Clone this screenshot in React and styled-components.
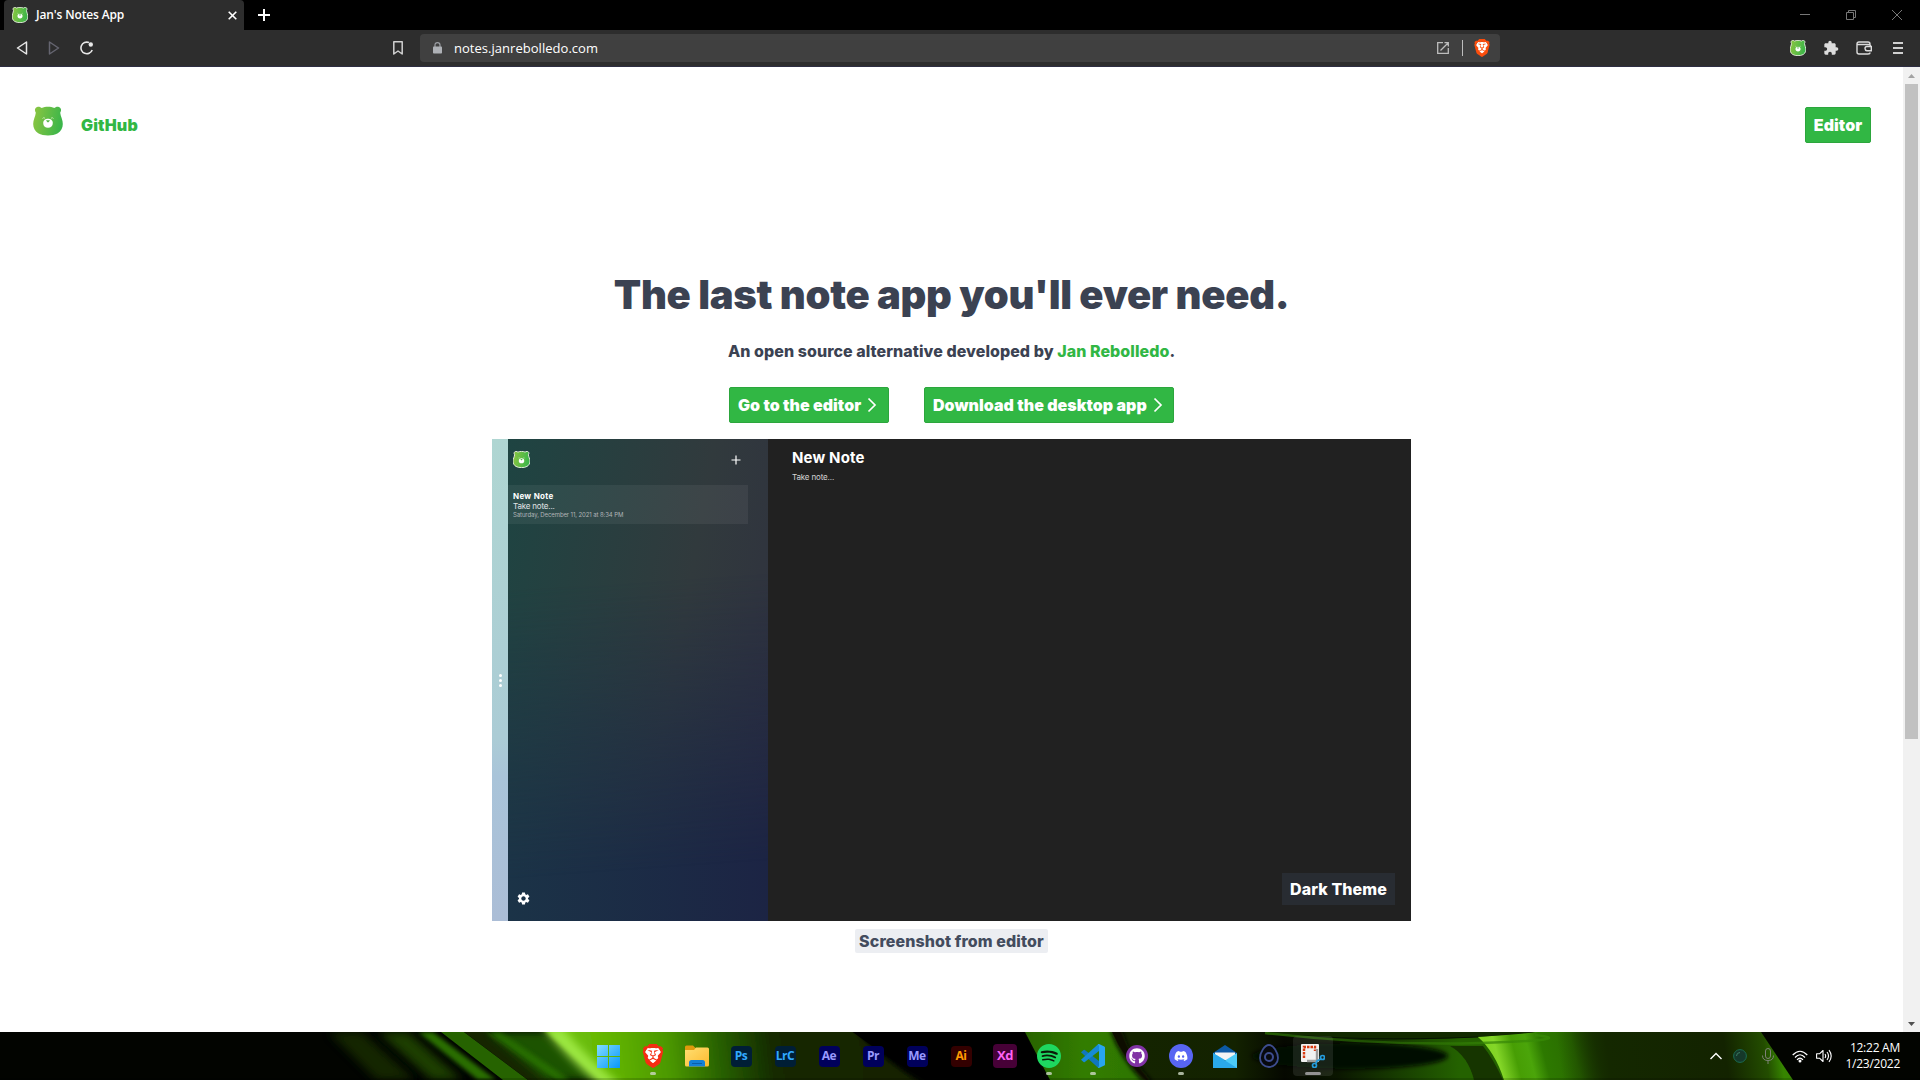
import React from "react";
import styled, { createGlobalStyle } from "styled-components";
import { SiBrave, SiSpotify } from "react-icons/si";
import { FaGithub, FaDiscord } from "react-icons/fa";
import { MdSettings, MdExtension } from "react-icons/md";

const GlobalStyle = createGlobalStyle`
  * { box-sizing: border-box; }
  body { margin: 0; background: #fff; overflow: hidden; font-family: Inter, "Liberation Sans", sans-serif; }
  svg { display: block; flex: none; }
  h1, h2, p { margin: 0; }
`;

const GREEN = "#31b744";
const system = `"Open Sans", "Noto Sans", sans-serif`;

const Screen = styled.div`
  width: 1920px;
  height: 1080px;
  display: flex;
  flex-direction: column;
  overflow: hidden;
`;

/* Browser chrome */
const TabStrip = styled.div`
  height: 30px;
  flex: none;
  background: #000;
  display: flex;
  align-items: center;
  padding-left: 4px;
`;
const Tab = styled.div`
  width: 240px;
  height: 30px;
  display: flex;
  align-items: center;
  padding: 0 7px 0 8px;
  background: #2d2d2d;
  border-radius: 4px 4px 0 0;
`;
const TabTitle = styled.span`
  flex: 1;
  margin-left: 8px;
  font: 600 12px/16px ${system};
  letter-spacing: -0.14px;
  color: #fff;
  white-space: nowrap;
`;
const NewTab = styled.div`
  margin-left: 14px;
`;
const WindowControls = styled.div`
  display: flex;
  gap: 36px;
  margin-left: auto;
  padding-right: 18px;
`;
const Toolbar = styled.div`
  height: 37px;
  flex: none;
  background: #2d2d2d;
  border-bottom: 1px solid #2d2d42;
  display: flex;
  align-items: center;
`;
const NavButtons = styled.div`
  width: 389px;
  display: flex;
  align-items: center;
  gap: 20px;
  padding-left: 16px;
`;
const Bookmark = styled.div`
  width: 31px;
  padding-left: 3px;
`;
const AddressBar = styled.div`
  width: 1080px;
  height: 28px;
  border-radius: 4px;
  background: #404040;
  display: flex;
  align-items: center;
  padding: 0 9px 0 13px;
`;
const Url = styled.span`
  flex: 1;
  margin-left: 12px;
  font: 400 13px/18px ${system};
  letter-spacing: 0.03px;
  color: #fff;
`;
const Divider = styled.div`
  width: 1px;
  height: 16px;
  margin: 0 10px 0 13px;
  background: #bdbdbd;
`;
const Extensions = styled.div`
  margin-left: auto;
  display: flex;
  align-items: center;
  gap: 17px;
  padding-right: 16px;
`;
const MenuButton = styled.div`
  margin-left: 3px;
`;

/* Page */
const Viewport = styled.div`
  height: 965px;
  flex: none;
  display: flex;
  background: #fff;
`;
const Page = styled.main`
  width: 1903px;
  display: flex;
  flex-direction: column;
  align-items: center;
`;
const ScrollTrack = styled.div`
  width: 17px;
  background: #f1f1f1;
  display: flex;
  flex-direction: column;
  align-items: center;
`;
const ScrollThumb = styled.div`
  width: 13px;
  height: 655px;
  background: #c1c1c1;
`;
const ScrollArrow = styled.div`
  width: 17px;
  height: 17px;
  display: grid;
  place-items: center;
  margin-top: ${(p) => (p.$last ? "auto" : 0)};
`;
const Header = styled.header`
  width: 100%;
  height: 113px;
  display: flex;
  align-items: flex-start;
  padding: 40px 32px 0 33px;
`;
const Logo = styled.div`
  height: 30px;
  margin-top: -1px;
`;
const GitHubLink = styled.a`
  margin: 8px auto 0 18px;
  font-weight: 900;
  font-size: 16px;
  line-height: 20px;
  letter-spacing: 0.15px;
  color: ${GREEN};
`;
const Button = styled.button`
  height: 36px;
  width: ${(p) => p.$width}px;
  padding: 0 8px;
  border: 1px solid #2ca63d;
  border-radius: 2px;
  background: ${GREEN};
  color: #fff;
  font: 900 16px/20px Inter, sans-serif;
  letter-spacing: 0.05px;
  display: flex;
  align-items: center;
  justify-content: ${(p) => (p.$center ? "center" : "flex-start")};
  gap: 6px;
  white-space: nowrap;
`;
const Title = styled.h1`
  margin-top: 87px;
  font-weight: 900;
  font-size: 40px;
  line-height: 56px;
  letter-spacing: -0.31px;
  color: #3b4252;
  white-space: nowrap;
`;
const Subtitle = styled.p`
  margin-top: 17px;
  margin-bottom: 1px;
  font-weight: 800;
  font-size: 16px;
  line-height: 22px;
  letter-spacing: 0.06px;
  color: #3b4252;
  white-space: nowrap;
  a { color: ${GREEN}; }
`;
const Actions = styled.div`
  display: flex;
  gap: 35px;
  margin-top: 24px;
`;

/* Editor preview */
const Preview = styled.section`
  width: 919px;
  height: 482px;
  margin-top: 16px;
  display: flex;
`;
const Handle = styled.div`
  width: 16px;
  background: linear-gradient(to bottom, #afd6d2, #abccd5 62%, #a9c4d9 70%, #abbdd6);
  display: flex;
  flex-direction: column;
  align-items: center;
  justify-content: center;
  gap: 2px;
  i { width: 3px; height: 3px; border-radius: 50%; background: #fff; }
`;
const Sidebar = styled.aside`
  width: 260px;
  position: relative;
  display: flex;
  flex-direction: column;
  background: linear-gradient(to right, #1b3347, #1c2444);
  isolation: isolate;
  &::before {
    content: "";
    position: absolute;
    inset: 0;
    z-index: -1;
    background: linear-gradient(100deg, #1e4442, #313a3d 60%, #2f303f);
    mask-image: linear-gradient(176deg, #000 30%, transparent 88%);
  }
`;
const SidebarTop = styled.div`
  display: flex;
  justify-content: space-between;
  align-items: center;
  height: 46px;
  padding: 0 27px 5px 5px;
`;
const NoteCard = styled.div`
  width: 240px;
  height: 39px;
  padding: 6px 5px;
  background: rgba(255, 255, 255, 0.06);
  color: #fff;
`;
const NoteTitle = styled.div`
  font-size: 8px;
  line-height: 10px;
  font-weight: 700;
  letter-spacing: 0.3px;
`;
const NoteText = styled.div`
  font-size: 8px;
  line-height: 10px;
  letter-spacing: -0.18px;
  color: #e2e4e6;
`;
const NoteDate = styled.div`
  font-size: 6px;
  line-height: 7px;
  letter-spacing: -0.1px;
  color: #b0b4b7;
`;
const SettingsButton = styled.div`
  margin: auto 0 15px 8px;
`;
const EditorPane = styled.div`
  flex: 1;
  background: #212121;
  display: flex;
  flex-direction: column;
  padding: 9px 16px 16px 24px;
`;
const EditorTitle = styled.h2`
  font-size: 15px;
  line-height: 20px;
  font-weight: 700;
  letter-spacing: 0.15px;
  color: #fff;
`;
const EditorText = styled.p`
  margin-top: 4px;
  font-size: 8px;
  line-height: 10px;
  letter-spacing: -0.15px;
  color: #d5d5d5;
`;
const ThemeLabel = styled.div`
  width: 113px;
  height: 32px;
  margin: auto 0 0 auto;
  background: #282c32;
  color: #fff;
  font-weight: 800;
  font-size: 16px;
  line-height: 32px;
  letter-spacing: 0.08px;
  text-align: center;
`;
const Caption = styled.div`
  width: 193px;
  height: 24px;
  margin-top: 8px;
  border-radius: 2px;
  background: #eceef2;
  color: #434c5e;
  font-weight: 800;
  font-size: 16px;
  line-height: 24px;
  letter-spacing: 0.1px;
  text-align: center;
  white-space: nowrap;
`;

/* Taskbar */
const TaskbarShell = styled.footer`
  position: relative;
  isolation: isolate;
  height: 48px;
  flex: none;
  background: #020400;
  display: grid;
  grid-template-columns: 587px 748px 1fr;
`;
const WallpaperLayer = styled.div`
  position: absolute;
  inset: 0;
  z-index: -1;
  overflow: hidden;
`;
const Apps = styled.div`
  grid-column: 2;
  display: flex;
`;
const AppCell = styled.div`
  position: relative;
  width: 44px;
  height: 48px;
  display: grid;
  place-items: center;
  &::before {
    content: "";
    display: ${(p) => (p.$active ? "block" : "none")};
    position: absolute;
    inset: 4px 2px;
    border-radius: 4px;
    background: rgba(255, 255, 255, 0.09);
  }
  &::after {
    content: "";
    display: ${(p) => (p.$running || p.$active ? "block" : "none")};
    position: absolute;
    left: ${(p) => (p.$active ? 14 : 19)}px;
    bottom: 5px;
    width: ${(p) => (p.$active ? 16 : 6)}px;
    height: 3px;
    border-radius: 2px;
    background: ${(p) => (p.$active ? "#929292" : "rgba(205,215,195,.8)")};
  }
  svg { position: relative; }
`;
const AdobeTile = styled.div`
  width: ${(p) => p.$size || 21}px;
  height: ${(p) => p.$size || 21}px;
  border-radius: 4px;
  background: ${(p) => p.$bg};
  color: ${(p) => p.$fg};
  font: 700 ${(p) => p.$font || 12}px/${(p) => (p.$size || 21) - 1}px ${system};
  letter-spacing: -0.4px;
  text-align: center;
`;
const Tray = styled.div`
  justify-self: end;
  display: flex;
  align-items: center;
  padding-right: 20px;
`;
const TrayItem = styled.div`
  width: ${(p) => p.$width}px;
  display: grid;
  place-items: center;
`;
const Clock = styled.div`
  width: 62px;
  font: 400 12px/16px ${system};
  letter-spacing: -0.25px;
  color: #fff;
  text-align: right;
  white-space: nowrap;
`;

function Bear({ size, outline, id }) {
  return (
    <svg width={size} height={size} viewBox="0 0 30 30">
      <defs>
        <linearGradient id={id} x1="0" y1=".3" x2="1" y2=".5">
          <stop offset="0" stopColor="#8ac541" />
          <stop offset="1" stopColor="#39b54a" />
        </linearGradient>
      </defs>
      <path
        d="M4.800 .700C6.500 .500 7.700 1.100 8.600 2C12.500 .200 17.500 .200 21.400 2C22.300 1.100 23.500 .500 25.200 .700C28 1.100 28.900 4.300 27.200 6.700C27.400 8.500 28 10.200 28.700 12.200C31 18.600 29.700 24.200 24.800 27.200C19.400 30.100 10.600 30.100 5.200 27.200C.300 24.200-1 18.600 1.300 12.200C2 10.200 2.600 8.500 2.800 6.700C1.100 4.300 2 1.100 4.800 .700Z"
        fill={`url(#${id})`}
        stroke={outline ? "#eef3e6" : "none"}
        strokeWidth="1.600"
      />
      <path d="M9.500 12.500Q10.500 11.200 12 12.200M20.500 12.500Q19.500 11.200 18 12.200" stroke="#d9f0c8" strokeWidth=".800" fill="none" />
      <path d="M10.200 17C10.200 14.200 12.600 12.800 15 12.800S19.800 14.200 19.800 17C19.800 20 18 21.700 15 21.700S10.200 20 10.200 17Z" fill="#fff" />
      <path d="M13 14.200H17L15.600 16.300H14.400Z" fill="#55b948" />
    </svg>
  );
}

function BraveMark({ size, color }) {
  return (
    <svg width={size} height={size} viewBox="0 0 24 24">
      <path d="M6 4H18L20 8L18 17L12 22L6 17L4 8Z" fill="#fff" />
      <SiBrave size={24} color={color} />
    </svg>
  );
}

function Chevron() {
  return (
    <svg width="10" height="16" viewBox="0 0 10 16">
      <path d="M1.500 1.500L8 8L1.500 14.500" fill="none" stroke="#fff" strokeWidth="1.700" />
    </svg>
  );
}

function Wallpaper() {
  const stripes = [
    ["329,0 362,0 415,48 377,48", "#1d3602", 5, 0.7],
    ["378,0 408,0 462,48 432,48", "#244804", 5, 0.85],
    ["418,0 433,0 496,48 478,48", "#2f7a04", 2, 0.9],
    ["441,0 464,0 528,48 503,48", "#276404", 0.6, 1],
    ["464,0 488,0 553,48 528,48", "#142502", 0.6, 1],
    ["488,0 545,0 600,48 545,48", "#1d5202", 4, 1],
    ["486,0 500,0 570,48 556,48", "#2a7403", 2, 0.8],
  ];
  return (
    <svg width="1920" height="48" viewBox="0 0 1920 48">
      <defs>
        {[0.6, 2, 4, 5].map((b) => (
          <filter key={b} id={`soft${b * 10}`} x="-20%" y="-50%" width="140%" height="200%">
            <feGaussianBlur stdDeviation={b} />
          </filter>
        ))}
        <linearGradient id="lime" gradientUnits="userSpaceOnUse" x1="545" y1="35" x2="870" y2="0">
          <stop offset="0" stopColor="#77c91a" />
          <stop offset=".2" stopColor="#63b500" />
          <stop offset=".38" stopColor="#4b9800" />
          <stop offset=".54" stopColor="#275f00" />
          <stop offset=".7" stopColor="#132900" />
          <stop offset="1" stopColor="#152400" />
        </linearGradient>
        <linearGradient id="leaf" x1="0" x2="1">
          <stop offset="0" stopColor="#286304" />
          <stop offset=".5" stopColor="#327d02" />
          <stop offset="1" stopColor="#2d7400" />
        </linearGradient>
        <linearGradient id="fade" gradientUnits="userSpaceOnUse" x1="1140" y1="0" x2="1520" y2="0">
          <stop offset="0" stopColor="#142400" />
          <stop offset=".25" stopColor="#132200" />
          <stop offset=".38" stopColor="#050800" />
          <stop offset=".52" stopColor="#0a1600" />
          <stop offset=".68" stopColor="#173d00" />
          <stop offset=".84" stopColor="#246200" />
          <stop offset="1" stopColor="#246200" />
        </linearGradient>
        <linearGradient id="glow" gradientUnits="userSpaceOnUse" x1="1480" y1="25" x2="1592" y2="-4">
          <stop offset="0" stopColor="#7dd31d" />
          <stop offset=".15" stopColor="#84d628" />
          <stop offset=".3" stopColor="#479e04" />
          <stop offset=".42" stopColor="#4ba50a" />
          <stop offset=".54" stopColor="#2d7900" />
          <stop offset=".8" stopColor="#2a6c00" />
          <stop offset="1" stopColor="#1b3d00" />
        </linearGradient>
        <linearGradient id="edge" gradientUnits="userSpaceOnUse" x1="1560" y1="30" x2="1778" y2="0">
          <stop offset="0" stopColor="#153000" stopOpacity="0" />
          <stop offset=".22" stopColor="#142800" />
          <stop offset=".75" stopColor="#132300" />
          <stop offset=".93" stopColor="#234d00" />
          <stop offset="1" stopColor="#368500" />
        </linearGradient>
        <linearGradient id="rim" gradientUnits="userSpaceOnUse" x1="1265" y1="0" x2="1535" y2="0">
          <stop offset="0" stopColor="#2f7a04" />
          <stop offset=".35" stopColor="#286604" />
          <stop offset="1" stopColor="#388c06" />
        </linearGradient>
      </defs>
      {stripes.map(([points, fill, blur, opacity], i) => (
        <polygon key={i} points={points} fill={fill} opacity={opacity} filter={`url(#soft${blur * 10})`} />
      ))}
      <path d="M540 -6H850Q880 26 925 54H608Z" fill="url(#lime)" filter="url(#soft20)" />
      <path d="M543 -4L562 -4Q585 24 622 54H600Q566 25 543-4Z" fill="#9de843" filter="url(#soft40)" />
      <path d="M846 -5H1022L1050 54H935Q885 25 846-5Z" fill="#000" filter="url(#soft6)" />
      <path d="M1118 -6H1520V54H1153Q1130 28 1118 -6Z" fill="url(#fade)" />
      <path d="M1025 0H1112Q1125 28 1146 48H1050Z" fill="url(#leaf)" filter="url(#soft6)" />
      <path d="M1110 -2H1122Q1132 28 1153 50H1143Q1120 26 1110 -2Z" fill="#071000" filter="url(#soft20)" />
      <ellipse cx="1350" cy="24" rx="98" ry="13" fill="#040800" filter="url(#soft20)" />
      <path d="M1450 14H1483Q1494 28 1503 48H1474Q1468 24 1450 14Z" fill="#173500" filter="url(#soft6)" />
      <path d="M1478 5L1535 0H1700V48H1504Q1495 20 1478 5Z" fill="url(#glow)" />
      <path d="M1540 0H1761L1793 48H1540Z" fill="url(#edge)" />
      <path d="M1265 0Q1350 10 1430 7T1535 0Z" fill="#122a00" />
      <path d="M1270 1Q1360 10 1478 5" stroke="#061300" strokeWidth="1" fill="none" />
      <path d="M1265 1Q1380 14 1480 11T1535 3" stroke="url(#rim)" strokeWidth="2.500" fill="none" opacity=".7" />
      <rect y="46" width="1920" height="2" fill="#000" opacity=".15" />
    </svg>
  );
}

const adobe = [
  ["Ps", "#001e36", "#31a8ff"],
  ["LrC", "#001e36", "#31a8ff"],
  ["Ae", "#00005b", "#9999ff"],
  ["Pr", "#00005b", "#9999ff"],
  ["Me", "#00005b", "#9999ff"],
  ["Ai", "#330000", "#ff9a00"],
];

function Taskbar() {
  return (
    <TaskbarShell>
      <WallpaperLayer><Wallpaper /></WallpaperLayer>
      <Apps>
        <AppCell>
          <svg width="24" height="24" viewBox="0 0 24 24">
            <defs>
              <linearGradient id="win" x1="0" y1="0" x2="1" y2="1">
                <stop offset="0" stopColor="#81dcff" />
                <stop offset="1" stopColor="#0797fa" />
              </linearGradient>
            </defs>
            <path d="M0 1H11V12H0ZM12 1H23V12H12ZM0 13H11V24H0ZM12 13H23V24H12Z" fill="url(#win)" />
          </svg>
        </AppCell>
        <AppCell $running><BraveMark size={24} color="#f52d12" /></AppCell>
        <AppCell>
          <svg width="24" height="22" viewBox="0 0 24 22">
            <defs>
              <linearGradient id="folder" x1="0" y1="0" x2="1" y2="1">
                <stop offset="0" stopColor="#ffdf72" />
                <stop offset="1" stopColor="#fdb92e" />
              </linearGradient>
            </defs>
            <path d="M0 2Q0 .500 1.500 .500H8L10.500 3H22V8H0Z" fill="#de9a0c" />
            <path d="M0 5H9L11 2.500H22.500Q24 2.500 24 4V20Q24 21.500 22.500 21.500H1.500Q0 21.500 0 20Z" fill="url(#folder)" />
            <path d="M4 21.500V17.500Q4 15 6.500 15H17.500Q20 15 20 17.500V21.500Z" fill="#1480d8" />
            <path d="M7 18.500H17" stroke="#0b5eaa" />
          </svg>
        </AppCell>
        {adobe.map(([name, bg, fg]) => (
          <AppCell key={name}><AdobeTile $bg={bg} $fg={fg}>{name}</AdobeTile></AppCell>
        ))}
        <AppCell><AdobeTile $bg="#470137" $fg="#ff61f6" $size={24} $font={13}>Xd</AdobeTile></AppCell>
        <AppCell $running>
          <svg width="24" height="24" viewBox="0 0 24 24">
            <circle cx="12" cy="12" r="10.500" fill="#0b1a08" />
            <SiSpotify size={24} color="#1ed760" />
          </svg>
        </AppCell>
        <AppCell $running>
          <svg width="24" height="24" viewBox="0 0 24 24">
            <path d="M0 8.300L2.600 6Q3.200 5.600 3.800 6L18 17V24L16.800 23.500Z" fill="#1177bd" />
            <path d="M0 15.700L2.600 18Q3.200 18.400 3.800 18L18 7V0L16.800 .500Z" fill="#168bd6" />
            <path d="M18 0L23.300 2.500Q24 2.900 24 3.600V20.400Q24 21.100 23.300 21.500L18 24L16.800 23.500Q18 23 18 21.500V2.500Q18 1 16.800 .500Z" fill="#28a5ef" />
          </svg>
        </AppCell>
        <AppCell>
          <svg width="22" height="22" viewBox="0 0 22 22">
            <circle cx="11" cy="11" r="11" fill="#8133a5" />
            <g transform="translate(3 3)"><FaGithub size={16} color="#fff" /></g>
          </svg>
        </AppCell>
        <AppCell $running>
          <svg width="24" height="24" viewBox="0 0 24 24">
            <circle cx="12" cy="12" r="12" fill="#5865f2" />
            <g transform="translate(5 5)"><FaDiscord size={14} color="#fff" /></g>
          </svg>
        </AppCell>
        <AppCell>
          <svg width="24" height="23" viewBox="0 0 24 23">
            <path d="M0 8L12 0L24 8V12H0Z" fill="#0c59a4" />
            <path d="M2 7.500H22V15H2Z" fill="#f2f3f4" />
            <path d="M0 8L12 15L0 23Z" fill="#32bdf2" />
            <path d="M24 8L0 23H24Z" fill="#4ccbf8" />
            <path d="M0 8L24 23H0Z" fill="#2aa9ea" />
          </svg>
        </AppCell>
        <AppCell>
          <svg width="20" height="24" viewBox="0 0 20 24">
            <path d="M10 1C14.500 1 19 8.500 19 14A9 9 0 0 1 1 14C1 8.500 5.500 1 10 1Z" fill="#07090e" stroke="#3d4d8e" strokeWidth="1.800" />
            <circle cx="10" cy="13" r="4" fill="none" stroke="#3d4d8e" strokeWidth="2" />
          </svg>
        </AppCell>
        <AppCell $active>
          <svg width="24" height="24" viewBox="0 0 24 24">
            <rect width="18" height="18" rx="1" fill="#f1f1f1" />
            <path d="M3 14V3H14V7" fill="none" stroke="#d83b13" strokeWidth="2.400" strokeDasharray="2.500 1" />
            <path d="M16 5V17H6" fill="none" stroke="#9b9b9b" strokeWidth="2.400" />
            <circle cx="21.500" cy="13.500" r="2" fill="none" stroke="#249bdc" strokeWidth="1.700" />
            <circle cx="13.500" cy="21.500" r="2" fill="none" stroke="#249bdc" strokeWidth="1.700" />
            <path d="M20 15L16 17L14.500 20" fill="none" stroke="#249bdc" strokeWidth="1.700" />
          </svg>
        </AppCell>
      </Apps>
      <Tray>
        <TrayItem $width={24}>
          <svg width="12" height="8" viewBox="0 0 12 8"><path d="M.500 7L6 1.500L11.500 7" fill="none" stroke="#fff" strokeWidth="1.400" /></svg>
        </TrayItem>
        <TrayItem $width={24}>
          <svg width="14" height="14" viewBox="0 0 14 14">
            <circle cx="7" cy="7" r="6.400" fill="#15382a" stroke="#1b6b51" />
            <path d="M3.500 7Q3.500 3.500 7 3.500" fill="none" stroke="#3c7c61" />
          </svg>
        </TrayItem>
        <TrayItem $width={32}>
          <svg width="12" height="16" viewBox="0 0 12 16">
            <rect x="3.500" y=".500" width="5" height="10" rx="2.500" fill="none" stroke="#7d8277" />
            <path d="M.500 7.500Q.500 12.500 6 12.500T11.500 7.500M6 12.500V16" fill="none" stroke="#7d8277" />
          </svg>
        </TrayItem>
        <TrayItem $width={32}>
          <svg width="16" height="13" viewBox="0 0 16 13">
            <path d="M.700 5Q8-2.500 15.300 5M3 7.500Q8 2 13 7.500M5 9.800Q8 6.300 11 9.800" fill="none" stroke="#fff" strokeWidth="1.200" />
            <circle cx="8" cy="11" r="1.500" fill="#fff" />
          </svg>
        </TrayItem>
        <TrayItem $width={16}>
          <svg width="16" height="14" viewBox="0 0 16 14">
            <path d="M.600 4.800H3.500L7 1.500V12.500L3.500 9.200H.600Z" fill="none" stroke="#fff" strokeWidth="1.100" strokeLinejoin="round" />
            <path d="M9 5Q10.400 7 9 9M11 3Q14 7 11 11M13 1.200Q17.400 7 13 12.800" fill="none" stroke="#fff" strokeWidth="1.100" />
          </svg>
        </TrayItem>
        <TrayItem $width={6} />
        <Clock>12:22 AM<br />1/23/2022</Clock>
      </Tray>
    </TaskbarShell>
  );
}

function BrowserChrome() {
  return (
    <>
      <TabStrip>
        <Tab>
          <Bear size={16} outline id="bearTab" />
          <TabTitle>Jan's Notes App</TabTitle>
          <svg width="9" height="9" viewBox="0 0 9 9"><path d="M.700 .700L8.300 8.300M8.300 .700L.700 8.300" stroke="#fff" strokeWidth="1.600" /></svg>
        </Tab>
        <NewTab>
          <svg width="12" height="12" viewBox="0 0 12 12"><path d="M0 6H12M6 0V12" stroke="#fff" strokeWidth="2" /></svg>
        </NewTab>
        <WindowControls>
          <svg width="10" height="10" viewBox="0 0 10 10"><path d="M0 4.500H10" stroke="#777" /></svg>
          <svg width="10" height="10" viewBox="0 0 10 10"><path d="M.500 2.500H7.500V9.500H.500ZM2.500 2.500V.500H9.500V7.500H7.500" fill="none" stroke="#777" /></svg>
          <svg width="10" height="10" viewBox="0 0 10 10"><path d="M0 0L10 10M10 0L0 10" stroke="#777" /></svg>
        </WindowControls>
      </TabStrip>
      <Toolbar>
        <NavButtons>
          <svg width="12" height="14" viewBox="0 0 12 14"><path d="M10.500 1V13L1.500 7Z" fill="none" stroke="#e8e8e8" strokeWidth="1.500" strokeLinejoin="round" /></svg>
          <svg width="12" height="14" viewBox="0 0 12 14"><path d="M1.500 1V13L10.500 7Z" fill="none" stroke="#656570" strokeWidth="1.500" strokeLinejoin="round" /></svg>
          <svg width="14" height="14" viewBox="0 0 14 14">
            <path d="M12.200 9A5.800 5.800 0 1 1 9 1.600" fill="none" stroke="#e8e8e8" strokeWidth="1.600" />
            <circle cx="10.800" cy="3.500" r="2.200" fill="#e8e8e8" />
          </svg>
        </NavButtons>
        <Bookmark>
          <svg width="12" height="14" viewBox="0 0 12 14"><path d="M1.800 .800H10.200V13L6 10L1.800 13Z" fill="none" stroke="#d0d0d0" strokeWidth="1.500" strokeLinejoin="round" /></svg>
        </Bookmark>
        <AddressBar>
          <svg width="9" height="12" viewBox="0 0 9 12">
            <path d="M2 5V3Q2 .700 4.500 .700T7 3V5" fill="none" stroke="#9da0a5" strokeWidth="1.200" />
            <rect y="4.500" width="9" height="7" rx=".800" fill="#aeb1b6" />
          </svg>
          <Url>notes.janrebolledo.com</Url>
          <svg width="12" height="12" viewBox="0 0 12 12"><path d="M6 .700H.700V11.300H11.300V6M3.500 8.500L10.800 1.200M7.500 .700H11.300V4.500" fill="none" stroke="#bdbdbd" strokeWidth="1.300" /></svg>
          <Divider />
          <BraveMark size={18} color="#fb4d0c" />
        </AddressBar>
        <Extensions>
          <Bear size={16} outline id="bearExt" />
          <MdExtension size={16} color="#dcdcdc" />
          <svg width="16" height="14" viewBox="0 0 16 14">
            <path d="M14 4V3Q14 1 12 1H3Q1 1 1 3V11Q1 13 3 13H12Q14 13 14 11.500M1 3.500H13Q14.500 3.500 14.500 5.500M15.300 5.500H11Q9 5.500 9 7.500T11 9.800H15.300Z" fill="none" stroke="#dcdcdc" strokeWidth="1.400" />
          </svg>
          <MenuButton>
            <svg width="12" height="12" viewBox="0 0 12 12"><path d="M1 1H11M1 6H11M1 11H11" stroke="#cfcfcf" strokeWidth="2" /></svg>
          </MenuButton>
        </Extensions>
      </Toolbar>
    </>
  );
}

function EditorPreview() {
  return (
    <Preview>
      <Handle><i /><i /><i /></Handle>
      <Sidebar>
        <SidebarTop>
          <Bear size={17} outline id="bearNote" />
          <svg width="10" height="10" viewBox="0 0 10 10"><path d="M5 .500V9.500M.500 5H9.500" stroke="#fff" strokeWidth="1.200" /></svg>
        </SidebarTop>
        <NoteCard>
          <NoteTitle>New Note</NoteTitle>
          <NoteText>Take note...</NoteText>
          <NoteDate>Saturday, December 11, 2021 at 8:34 PM</NoteDate>
        </NoteCard>
        <SettingsButton><MdSettings size={15} color="#fff" /></SettingsButton>
      </Sidebar>
      <EditorPane>
        <EditorTitle>New Note</EditorTitle>
        <EditorText>Take note...</EditorText>
        <ThemeLabel>Dark Theme</ThemeLabel>
      </EditorPane>
    </Preview>
  );
}

export default function App() {
  return (
    <Screen>
      <GlobalStyle />
      <BrowserChrome />
      <Viewport>
        <Page>
          <Header>
            <Logo><Bear size={30} id="bearLogo" /></Logo>
            <GitHubLink>GitHub</GitHubLink>
            <Button $width={66} $center>Editor</Button>
          </Header>
          <Title>The last note app you'll ever need.</Title>
          <Subtitle>An open source alternative developed by <a>Jan Rebolledo</a>.</Subtitle>
          <Actions>
            <Button $width={160}>Go to the editor<Chevron /></Button>
            <Button $width={250}>Download the desktop app<Chevron /></Button>
          </Actions>
          <EditorPreview />
          <Caption>Screenshot from editor</Caption>
        </Page>
        <ScrollTrack>
          <ScrollArrow><svg width="7" height="4" viewBox="0 0 7 4"><path d="M0 4L3.500 0L7 4Z" fill="#a3a3a3" /></svg></ScrollArrow>
          <ScrollThumb />
          <ScrollArrow $last><svg width="7" height="4" viewBox="0 0 7 4"><path d="M0 0L3.500 4L7 0Z" fill="#505050" /></svg></ScrollArrow>
        </ScrollTrack>
      </Viewport>
      <Taskbar />
    </Screen>
  );
}
